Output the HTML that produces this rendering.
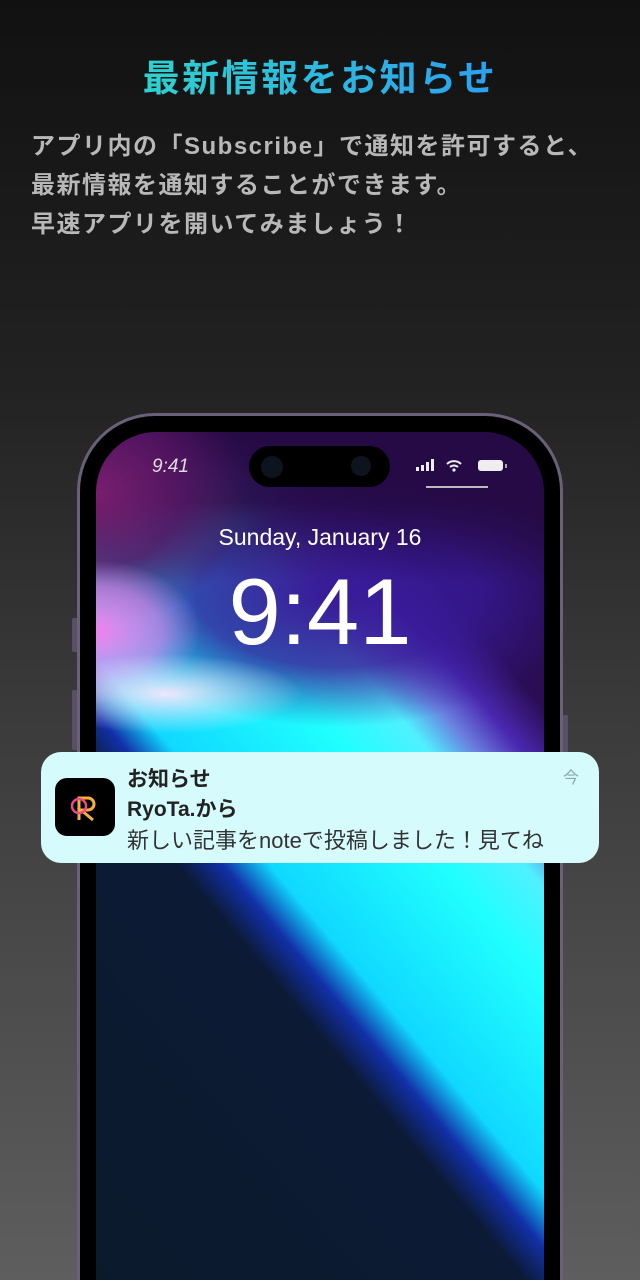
<!DOCTYPE html>
<html><head><meta charset="utf-8"><style>
*{margin:0;padding:0;box-sizing:border-box}
html,body{width:640px;height:1280px;overflow:hidden}
body{position:relative;background:linear-gradient(#111 0%,#222 30%,#3a3a3a 55%,#5e5e5e 100%);font-family:"Liberation Sans","Noto Sans CJK JP",sans-serif}
.title{position:absolute;top:48px;left:0;width:640px;text-align:center;font-size:37px;font-weight:700;background:linear-gradient(90deg,#2fe6c0,#2a8cff);-webkit-background-clip:text;background-clip:text;color:transparent;letter-spacing:2.5px}
.desc{position:absolute;top:127px;left:31px;font-size:24px;font-weight:700;color:#b8b8b8;line-height:39px;letter-spacing:1.5px;white-space:nowrap}
.side{position:absolute;background:#5a5066;width:6px;border-radius:2px}
.phone{position:absolute;left:77px;top:413px;width:486px;height:867px;border-radius:78px 78px 0 0;background:#6a6078;padding:3px 3px 0}
.bez{width:100%;height:100%;border-radius:75px 75px 0 0;background:#000;padding:16px 16px 0}
.scr{width:100%;height:100%;border-radius:60px 60px 0 0;overflow:hidden;position:relative;
background:
radial-gradient(ellipse 170px 50px at 70px 262px,rgba(250,230,250,.95),transparent 80%),
radial-gradient(ellipse 130px 90px at 0px 200px,rgba(240,130,235,1),rgba(240,130,235,.6) 50%,transparent 80%),
radial-gradient(ellipse 170px 150px at 0px 60px,rgba(120,30,110,1),rgba(90,20,100,.8) 50%,transparent 90%),
linear-gradient(180deg,rgba(37,10,69,1) 0,rgba(37,10,69,.9) 70px,rgba(37,10,69,0) 150px),
radial-gradient(ellipse 280px 150px at 240px 160px,rgba(55,25,150,1),rgba(55,25,150,.8) 50%,transparent 90%),
linear-gradient(50deg,#0b1a2b 0%,#0c1a35 37%,#1230a8 41%,#10d8ff 45%,#20ffff 60%,#50f0ff 67%,#6a80e0 71%,#4a28b0 75%,#2a0d55 80%,#240a45 100%)}
.time{position:absolute;top:126px;width:100%;text-align:center;color:#fff;font-size:94px;font-weight:300}
.date{position:absolute;top:92px;width:100%;text-align:center;color:#fff;font-size:23px}
.notif{position:absolute;left:41px;top:752px;width:558px;height:111px;border-radius:20px;background:#d6fbfc}
.icon{position:absolute;left:14px;top:26px;width:60px;height:58px;border-radius:12px;background:#000}
.n1{position:absolute;left:86px;top:11px;font-size:21px;font-weight:700;color:#222}
.n2{position:absolute;left:86px;top:41px;font-size:21px;font-weight:700;color:#222}
.n3{position:absolute;left:86px;top:71px;font-size:22px;color:#333;white-space:nowrap}
.now{position:absolute;right:20px;top:12px;font-size:16px;color:#8aa}
</style></head><body>
<div class="title">最新情報をお知らせ</div>
<div class="desc">アプリ内の「Subscribe」で通知を許可すると、<br>最新情報を通知することができます。<br>早速アプリを開いてみましょう！</div>
<div class="side" style="left:72px;top:618px;height:34px"></div>
<div class="side" style="left:72px;top:690px;height:60px"></div>
<div class="side" style="left:562px;top:715px;height:95px"></div>
<div class="phone"><div class="bez"><div class="scr">
<div style="position:absolute;left:56px;top:24px;color:#ddd;font-size:19px;font-style:italic;font-weight:300">9:41</div>
<div style="position:absolute;left:153px;top:14px;width:141px;height:41px;border-radius:21px;background:#000">
<div style="position:absolute;left:12px;top:10px;width:22px;height:22px;border-radius:50%;background:#0d1420"></div>
<div style="position:absolute;left:102px;top:10px;width:20px;height:20px;border-radius:50%;background:#0d1420"></div></div>
<svg style="position:absolute;left:320px;top:26px" width="100" height="32">
<rect x="0" y="9" width="3" height="4" fill="#eee"/><rect x="5" y="7" width="3" height="6" fill="#eee"/><rect x="10" y="4" width="3" height="9" fill="#eee"/><rect x="15" y="1" width="3" height="12" fill="#eee"/>
<path d="M31 6a10 10 0 0 1 14 0M34 9a6 6 0 0 1 8 0" stroke="#eee" stroke-width="2" fill="none"/><circle cx="38" cy="12" r="1.6" fill="#eee"/>
<rect x="62" y="2" width="25" height="11" rx="3" fill="#eee"/><rect x="89" y="6" width="2" height="4" fill="#aaa"/>
<rect x="10" y="28" width="62" height="2" fill="#bbb"/></svg>
<div class="date">Sunday, January 16</div>
<div class="time">9:41</div>
</div></div></div>
<div class="notif">
<div class="icon"><svg width="60" height="58"><path d="M24 42V20h9a6 6 0 0 1 0 12h-7l12 10" stroke="#f8b03a" stroke-width="3" fill="none"/><circle cx="24" cy="28" r="7" stroke="#e84a8a" stroke-width="2.5" fill="none"/></svg></div>
<div class="n1">お知らせ</div><div class="n2">RyoTa.から</div>
<div class="n3">新しい記事をnoteで投稿しました！見てね</div>
<div class="now">今</div>
</div>
</body></html>
